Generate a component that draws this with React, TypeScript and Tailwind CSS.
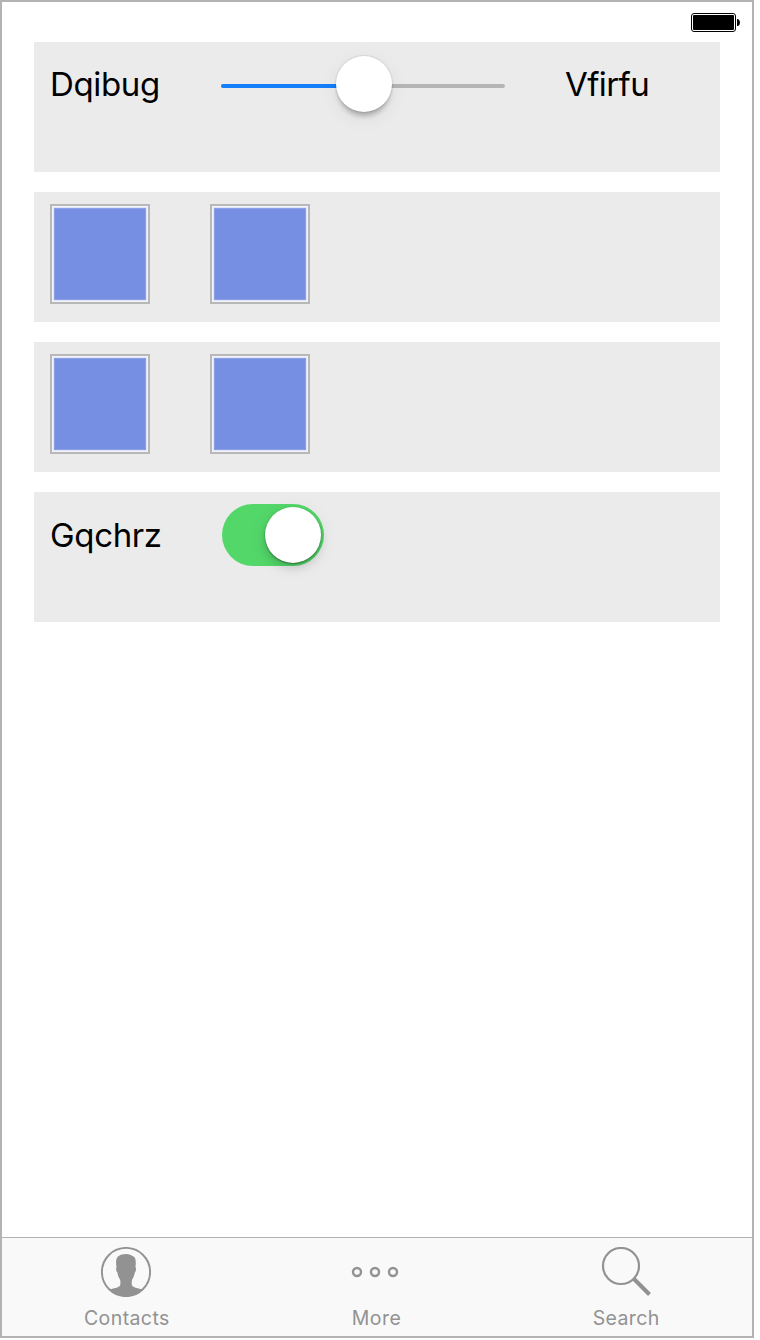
import React from "react";

function Panel({ children }: { children: React.ReactNode }) {
  return <section className="flex h-[130px] w-[686px] items-start bg-[#ebebeb] pl-4">{children}</section>;
}

function Swatch() {
  return (
    <div className="mt-3 h-[100px] w-[100px] border-2 border-[#b8b8b8] bg-[#f4f5fa] p-px">
      <div className="h-full w-full border border-[#dfe4f8] bg-[#c5cff4]">
        <div className="h-full w-full border border-[#8c9fe7] bg-[#768fe2]" />
      </div>
    </div>
  );
}

function Slider() {
  return (
    <div className="relative mt-[42px] h-1 w-[284px] rounded-full bg-[#b5b5b5]">
      <div className="h-1 w-[142px] rounded-l-full bg-[#147efb]" />
      <div className="absolute -top-[28px] left-[115px] h-14 w-14 rounded-full bg-white shadow-[0_0_1px_1px_rgba(0,0,0,0.08),0_6px_5px_-2px_rgba(0,0,0,0.24),0_5px_20px_rgba(0,0,0,0.07)]" />
    </div>
  );
}

function Toggle() {
  return (
    <div className="mt-3 flex h-[62px] w-[102px] justify-end rounded-full bg-[#53d769] p-[3px]">
      <div className="h-14 w-14 rounded-full bg-white shadow-[0_1px_2px_rgba(0,0,0,0.4),0_5px_10px_rgba(0,0,0,0.14),0_3px_22px_rgba(0,0,0,0.06)]" />
    </div>
  );
}

function ContactIcon() {
  return (
    <svg className="mr-0.5" width="50" height="50" viewBox="0 0 50 50" fill="none">
      <circle cx="25" cy="25" r="24.1" stroke="#929292" strokeWidth="1.9" />
      <path
        d="M8.5 42.7C12 41.2 18 40.8 19.1 38.2C19.7 36.6 19.3 34.5 19.2 32.7C17.5 30.5 16.7 28 16.4 25.6C15.2 24.9 14.7 20.8 15.5 20.2C14.8 15.1 14.7 10.9 17.4 9.2C19.2 7.8 22 7 25.2 7C28.2 7 30.2 8 31.2 9C34.9 9.4 35.3 14.8 34.4 20C35.5 20.7 35 24.9 33.8 25.5C33.3 28.3 32.5 30.8 31 32.7C30.8 34.7 30.5 36.7 31 38.2C32 40.8 38 41.2 41.5 42.7C37.3 47 31.6 49.5 25 49.5S12.7 47 8.5 42.7Z"
        fill="#929292"
      />
    </svg>
  );
}

function MoreIcon() {
  return (
    <svg className="mr-1" width="50" height="50" viewBox="0 0 50 50" fill="none" stroke="#929292" strokeWidth="2.4">
      <circle cx="7" cy="25" r="4" />
      <circle cx="25" cy="25" r="4" />
      <circle cx="43" cy="25" r="4" />
    </svg>
  );
}

function SearchIcon() {
  return (
    <svg width="50" height="50" viewBox="0 0 50 50" fill="none" stroke="#929292">
      <circle cx="20" cy="19" r="18" strokeWidth="2.2" />
      <path d="M32.5 31.5L48.5 47.5" strokeWidth="4" />
    </svg>
  );
}

function Tab({ label, children }: { label: string; children: React.ReactNode }) {
  return (
    <button className="flex w-[250px] flex-col items-center pt-[9px] text-[#929292]">
      {children}
      <span className="mt-[9px] text-[19.5px] leading-6 tracking-[0.4px]">{label}</span>
    </button>
  );
}

export default function App() {
  return (
    <div className="h-[1340px] w-[760px] bg-white">
      <div className="flex h-[1338px] w-[754px] flex-col border-2 border-[#b3b3b3] bg-white font-['Inter',sans-serif] text-black">
        <header className="flex h-10 justify-end pt-[11px] pr-3">
          <svg width="49" height="19" viewBox="0 0 49 19">
            <rect x="0.5" y="0.5" width="44" height="18" rx="2.5" fill="white" stroke="black" />
            <rect x="2" y="2" width="41" height="15" rx="1" fill="black" />
            <path d="M46 6H47Q49 7 49 9.5T47 13H46Z" fill="black" />
          </svg>
        </header>
        <main className="flex flex-1 flex-col gap-5 pl-8">
          <Panel>
            <span className="mt-[22px] w-[171px] text-[33px] leading-10 tracking-[-0.35px]">Dqibug</span>
            <Slider />
            <span className="mt-[22px] ml-[60px] text-[33px] leading-10 tracking-[-0.6px]">Vfirfu</span>
          </Panel>
          <Panel>
            <div className="flex gap-[60px]"><Swatch /><Swatch /></div>
          </Panel>
          <Panel>
            <div className="flex gap-[60px]"><Swatch /><Swatch /></div>
          </Panel>
          <Panel>
            <span className="mt-[23px] w-[172px] text-[33px] leading-10 tracking-[-0.35px]">Gqchrz</span>
            <Toggle />
          </Panel>
        </main>
        <nav className="flex h-[99px] border-t border-[#b2b2b2] bg-[#f9f9f9] pr-px">
          <Tab label="Contacts"><ContactIcon /></Tab>
          <Tab label="More"><MoreIcon /></Tab>
          <Tab label="Search"><SearchIcon /></Tab>
        </nav>
      </div>
    </div>
  );
}
